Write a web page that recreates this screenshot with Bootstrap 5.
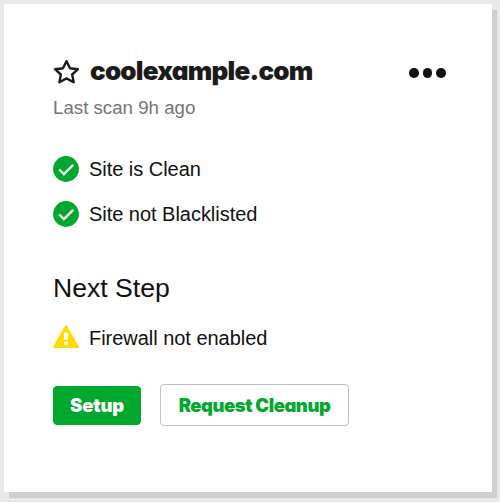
<!DOCTYPE html>
<html lang="en">
<head>
<meta charset="utf-8">
<meta name="viewport" content="width=device-width, initial-scale=1">
<title>coolexample.com</title>
<link href="https://cdn.jsdelivr.net/npm/bootstrap@5.3.0/dist/css/bootstrap.min.css" rel="stylesheet">
<style>
body{background:#e8e8e8;font-family:"Liberation Sans",Arial,sans-serif;color:#111;width:500px;height:502px;overflow:hidden}
.site-card{width:488px;height:488px;margin:4px;padding:49px;border:0;border-radius:0;box-shadow:5px 6px 0 #cecece;color:#111}
.brand-face{font-family:Inter,"Liberation Sans",sans-serif;font-weight:900;font-feature-settings:"cv11"}
.site-head{height:38px}
.site-name{font-size:26px;line-height:36px;padding-bottom:2px;letter-spacing:-.78px;margin-left:11px;color:#1b1b1b}
.dots{gap:4px;padding:2px 0 0;margin-right:-3px}
.dots span{width:9.7px;height:9.7px;border-radius:50%;background:#111}
.last-scan{font-size:18.7px;line-height:24px;margin-top:5px;color:#757575}
.checks{margin-top:33px}
.status{height:32px;font-size:20px;gap:10px;letter-spacing:-.03px}
.status svg{flex:none}
.checks .status+.status{margin-top:13px}
.next-title{font-size:26.6px;line-height:32px;margin:42px 0 18px;font-weight:400}
.actions{margin-top:30px;gap:19px}
.actions .btn{font-size:18.4px;line-height:20px;padding:0;border-radius:4px}
.btn-setup{width:88px;height:39px;--bs-btn-color:#fff;--bs-btn-bg:#00a82d;--bs-btn-border-color:#00a82d;letter-spacing:-.15px}
.btn-clean{width:189px;height:42px;--bs-btn-color:#00a82d;--bs-btn-bg:#fff;--bs-btn-border-color:#c2c2c2;letter-spacing:-.42px}
</style>
<script src="https://cdn.jsdelivr.net/npm/bootstrap@5.3.0/dist/js/bootstrap.bundle.min.js"></script>
</head>
<body>
<main class="card site-card">
  <header class="site-head d-flex align-items-center">
    <svg width="26" height="26" viewBox="0 0 26 26" fill="none" stroke="#1b1b1b" stroke-width="2.4" stroke-linejoin="round"><path d="M13.5 2.2l3.5 7.1 8 .9-5.8 5.3 1.5 7.7-7.2-3.8-7.1 3.8 1.4-7.7L2 10.2l8-.9z"/></svg>
    <h1 class="site-name brand-face mb-0">coolexample.com</h1>
    <button class="dots btn border-0 d-flex ms-auto" type="button" aria-label="More options"><span></span><span></span><span></span></button>
  </header>
  <p class="last-scan mb-0">Last scan 9h ago</p>
  <section class="checks">
    <div class="status d-flex align-items-center"><svg width="26" height="26" viewBox="0 0 26 26"><circle cx="13" cy="13" r="12.9" fill="#00a82d"/><path d="M6.2 13.5l4.7 4.6 9.3-9.2" fill="none" stroke="#fff" stroke-width="2.4"/></svg><span>Site is Clean</span></div>
    <div class="status d-flex align-items-center"><svg width="26" height="26" viewBox="0 0 26 26"><circle cx="13" cy="13" r="12.9" fill="#00a82d"/><path d="M6.2 13.5l4.7 4.6 9.3-9.2" fill="none" stroke="#fff" stroke-width="2.4"/></svg><span>Site not Blacklisted</span></div>
  </section>
  <h2 class="next-title">Next Step</h2>
  <div class="status d-flex align-items-center"><svg width="26" height="26" viewBox="0 0 26 26"><path d="M13 1.5L24.6 21.9H1.4z" fill="#ffdb00" stroke="#ffdb00" stroke-width="2.4" stroke-linejoin="round"/><path d="M11.1 7.6h3.8v7.2h-3.8zM11.1 16.5h3.8v3.3h-3.8z" fill="#fff"/></svg><span>Firewall not enabled</span></div>
  <div class="actions d-flex align-items-center">
    <button class="btn btn-setup brand-face" type="button">Setup</button>
    <button class="btn btn-clean brand-face" type="button">Request Cleanup</button>
  </div>
</main>
</body>
</html>
